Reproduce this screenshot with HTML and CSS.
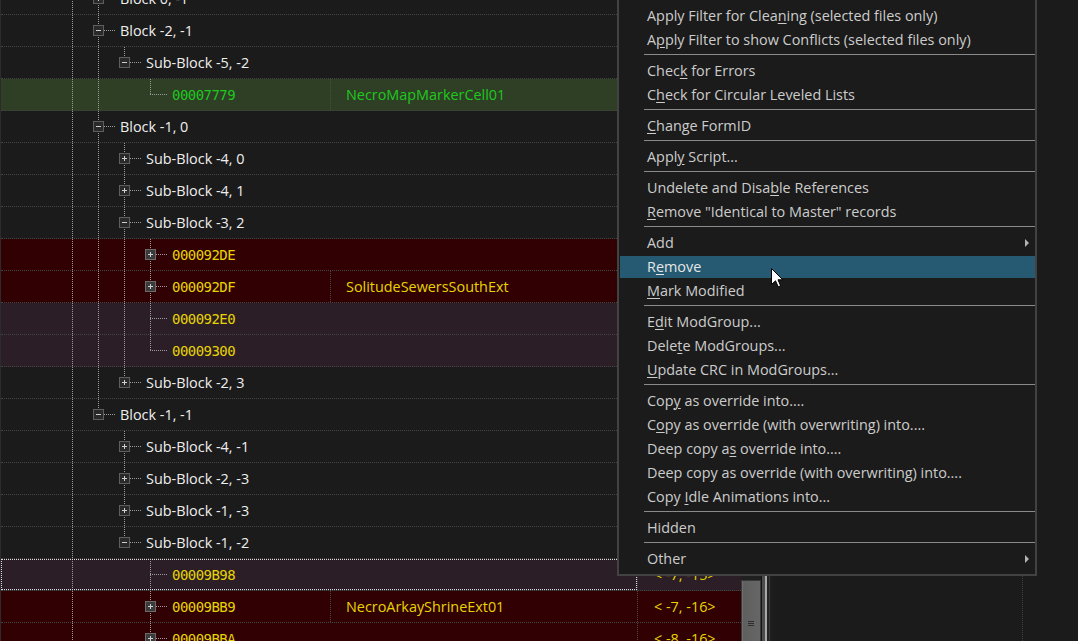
FILE: index.html
```html
<!DOCTYPE html>
<html>
<head>
<meta charset="utf-8">
<link rel="stylesheet" href="styles.css">
</head>
<body>
<div class="app">
  <div class="tree">
    <div class="rows">
      <div class="row"><div class="c1"><span class="g v"></span><span class="n tee"><i class="box plus"></i></span><span class="lbl">Block 0, -1</span></div></div>
      <div class="row"><div class="c1"><span class="g v"></span><span class="n tee"><i class="box minus"></i></span><span class="lbl">Block -2, -1</span></div></div>
      <div class="row"><div class="c1"><span class="g v"></span><span class="g v"></span><span class="n end"><i class="box minus"></i></span><span class="lbl">Sub-Block -5, -2</span></div></div>
      <div class="row green"><div class="c1 fix"><span class="g v"></span><span class="g v"></span><span class="g"></span><span class="n end"></span><span class="hex">00007779</span></div><div class="c2">NecroMapMarkerCell01</div></div>
      <div class="row"><div class="c1"><span class="g v"></span><span class="n tee"><i class="box minus"></i></span><span class="lbl">Block -1, 0</span></div></div>
      <div class="row"><div class="c1"><span class="g v"></span><span class="g v"></span><span class="n tee"><i class="box plus"></i></span><span class="lbl">Sub-Block -4, 0</span></div></div>
      <div class="row"><div class="c1"><span class="g v"></span><span class="g v"></span><span class="n tee"><i class="box plus"></i></span><span class="lbl">Sub-Block -4, 1</span></div></div>
      <div class="row"><div class="c1"><span class="g v"></span><span class="g v"></span><span class="n tee"><i class="box minus"></i></span><span class="lbl">Sub-Block -3, 2</span></div></div>
      <div class="row red"><div class="c1"><span class="g v"></span><span class="g v"></span><span class="g v"></span><span class="n tee"><i class="box plus"></i></span><span class="hex">000092DE</span></div></div>
      <div class="row red"><div class="c1 fix"><span class="g v"></span><span class="g v"></span><span class="g v"></span><span class="n tee"><i class="box plus"></i></span><span class="hex">000092DF</span></div><div class="c2">SolitudeSewersSouthExt</div></div>
      <div class="row purple"><div class="c1"><span class="g v"></span><span class="g v"></span><span class="g v"></span><span class="n tee"></span><span class="hex">000092E0</span></div></div>
      <div class="row purple"><div class="c1"><span class="g v"></span><span class="g v"></span><span class="g v"></span><span class="n end"></span><span class="hex">00009300</span></div></div>
      <div class="row"><div class="c1"><span class="g v"></span><span class="g v"></span><span class="n end"><i class="box plus"></i></span><span class="lbl">Sub-Block -2, 3</span></div></div>
      <div class="row"><div class="c1"><span class="g v"></span><span class="n end"><i class="box minus"></i></span><span class="lbl">Block -1, -1</span></div></div>
      <div class="row"><div class="c1"><span class="g v"></span><span class="g"></span><span class="n tee"><i class="box plus"></i></span><span class="lbl">Sub-Block -4, -1</span></div></div>
      <div class="row"><div class="c1"><span class="g v"></span><span class="g"></span><span class="n tee"><i class="box plus"></i></span><span class="lbl">Sub-Block -2, -3</span></div></div>
      <div class="row"><div class="c1"><span class="g v"></span><span class="g"></span><span class="n tee"><i class="box plus"></i></span><span class="lbl">Sub-Block -1, -3</span></div></div>
      <div class="row"><div class="c1"><span class="g v"></span><span class="g"></span><span class="n end"><i class="box minus"></i></span><span class="lbl">Sub-Block -1, -2</span></div></div>
      <div class="row purple"><div class="c1 focus"><span class="g v"></span><span class="g"></span><span class="g"></span><span class="n tee"></span><span class="hex">00009B98</span></div><div class="c3">&lt; -7, -15&gt;</div></div>
      <div class="row red"><div class="c1 fix"><span class="g v"></span><span class="g"></span><span class="g"></span><span class="n tee"><i class="box plus"></i></span><span class="hex">00009BB9</span></div><div class="c2">NecroArkayShrineExt01</div><div class="c3">&lt; -7, -16&gt;</div></div>
      <div class="row red"><div class="c1"><span class="g v"></span><span class="g"></span><span class="g"></span><span class="n tee"><i class="box plus"></i></span><span class="hex">00009BBA</span></div><div class="c3">&lt; -8, -16&gt;</div></div>
    </div>
  </div>
  <div class="vscroll"><div class="thumb"><i class="grip"></i></div></div>
  <div class="splitter"></div>
  <div class="panel"><div class="pcol"></div></div>
</div>

<div class="menu">
  <div class="mi"><span>Apply Filter</span></div>
  <div class="sep"></div>
  <div class="mi"><span>Apply Filter for Clea<u>n</u>ing (selected files only)</span></div>
  <div class="mi"><span>A<u>p</u>ply Filter to show Conflicts (selected files only)</span></div>
  <div class="sep"></div>
  <div class="mi"><span>Chec<u>k</u> for Errors</span></div>
  <div class="mi"><span>C<u>h</u>eck for Circular Leveled Lists</span></div>
  <div class="sep"></div>
  <div class="mi"><span><u>C</u>hange FormID</span></div>
  <div class="sep"></div>
  <div class="mi"><span>Appl<u>y</u> Script...</span></div>
  <div class="sep"></div>
  <div class="mi"><span>Undelete and Disa<u>b</u>le References</span></div>
  <div class="mi"><span><u>R</u>emove "Identical to Master" records</span></div>
  <div class="sep"></div>
  <div class="mi"><span>Add</span><svg class="arr" width="5" height="8" viewBox="0 0 5 8"><polygon points="0,0 4,4 0,8" fill="#b4b4b4"/></svg></div>
  <div class="mi hot"><span>R<u>e</u>move</span></div>
  <div class="mi"><span><u>M</u>ark Modified</span></div>
  <div class="sep"></div>
  <div class="mi"><span>E<u>d</u>it ModGroup...</span></div>
  <div class="mi"><span>Dele<u>t</u>e ModGroups...</span></div>
  <div class="mi"><span><u>U</u>pdate CRC in ModGroups...</span></div>
  <div class="sep"></div>
  <div class="mi"><span>Cop<u>y</u> as override into....</span></div>
  <div class="mi"><span>C<u>o</u>py as override (with overwriting) into....</span></div>
  <div class="mi"><span>Deep copy a<u>s</u> override into....</span></div>
  <div class="mi"><span>Deep copy as override (with overwriting) into....</span></div>
  <div class="mi"><span>Copy <u>I</u>dle Animations into...</span></div>
  <div class="sep"></div>
  <div class="mi"><span>Hidden</span></div>
  <div class="sep"></div>
  <div class="mi"><span>Other</span><svg class="arr" width="5" height="8" viewBox="0 0 5 8"><polygon points="0,0 4,4 0,8" fill="#b4b4b4"/></svg></div>
</div>

<svg class="cursor" width="13" height="20" viewBox="0 0 13 20"><polygon points="0.5,0.5 0.5,16.5 4.5,12.8 7.2,18.8 9.6,17.8 7,11.8 11.8,11.8" fill="#ffffff" stroke="#000000" stroke-width="1" stroke-linejoin="miter"/></svg>
</body>
</html>
```
FILE: styles.css
```css
html, body {
  margin: 0;
  padding: 0;
  background: #1b1b1b;
  overflow: hidden;
}
body {
  width: 1078px;
  height: 641px;
  position: relative;
  font-family: "Open Sans", "Noto Sans", sans-serif;
  font-size: 14.4px;
  color: #ececec;
}
.app {
  display: flex;
  height: 641px;
}
.tree {
  flex: 0 0 741px;
  box-sizing: border-box;
  border-left: 1px solid #2c2c2c;
  overflow: hidden;
  height: 641px;
}
.rows {
  margin-top: -17px;
}
.row {
  display: flex;
  height: 32px;
  box-sizing: border-box;
  border-bottom: 1px dotted #444444;
}
.row.green { background: #2e3f26; }
.row.red { background: #310002; }
.row.purple { background: #2c1e26; }

.c1 {
  flex: 1 1 auto;
  min-width: 0;
  display: flex;
  align-items: center;
  padding-left: 58px;
  white-space: nowrap;
  overflow: hidden;
}
.c1.fix {
  flex: 0 0 329px;
  box-sizing: border-box;
}
.c1.focus {
  outline: 1px dotted #dcdcdc;
  outline-offset: -1px;
}
.c2 {
  flex: 1 1 auto;
  min-width: 0;
  box-sizing: border-box;
  border-left: 1px dotted #4a4a4a;
  padding-left: 15px;
  display: flex;
  align-items: center;
  white-space: nowrap;
  color: #e6d500;
}
.green .c2 { color: #1ec81e; }
.c3 {
  flex: 0 0 104px;
  box-sizing: border-box;
  border-left: 1px dotted #4a4a4a;
  padding-left: 16px;
  display: flex;
  align-items: center;
  white-space: nowrap;
  color: #e6d500;
}

.g {
  flex: 0 0 26px;
  align-self: stretch;
}
.g.v {
  background: repeating-linear-gradient(to bottom, #9a9a9a 0 1px, transparent 1px 2px) 13px 0 / 1px 100% no-repeat;
}
.n {
  flex: 0 0 35px;
  align-self: stretch;
  display: flex;
  align-items: center;
  background-repeat: no-repeat;
}
.n.tee {
  background-image:
    repeating-linear-gradient(to right, #9a9a9a 0 1px, transparent 1px 2px),
    repeating-linear-gradient(to bottom, #9a9a9a 0 1px, transparent 1px 2px);
  background-position: 13px 15px, 13px 0;
  background-size: 17px 1px, 1px 100%;
}
.n.end {
  background-image:
    repeating-linear-gradient(to right, #9a9a9a 0 1px, transparent 1px 2px),
    repeating-linear-gradient(to bottom, #9a9a9a 0 1px, transparent 1px 2px);
  background-position: 13px 15px, 13px 0;
  background-size: 17px 1px, 1px 16px;
}
.box {
  display: block;
  width: 11px;
  height: 11px;
  box-sizing: border-box;
  margin-left: 8px;
  border: 1px solid #5e5e5e;
  background-color: #2a2a2a;
  background-repeat: no-repeat;
}
.red .box { background-color: #3a3a3a; border-color: #6a6a6a; }
.box.minus {
  background-image: linear-gradient(#cfcfcf, #cfcfcf);
  background-position: 2px 4px;
  background-size: 5px 1px;
}
.box.plus {
  background-image: linear-gradient(#cfcfcf, #cfcfcf), linear-gradient(#cfcfcf, #cfcfcf);
  background-position: 2px 4px, 4px 2px;
  background-size: 5px 1px, 1px 5px;
}
.lbl {
  color: #efefef;
}
.hex {
  font-family: "DejaVu Sans Mono", "Liberation Mono", monospace;
  font-size: 14px;
  letter-spacing: -0.55px;
  color: #e6d500;
}
.green .hex { color: #1ec81e; }

.vscroll {
  flex: 0 0 20px;
  background: #1f1f1f;
}
.thumb {
  margin-top: 580px;
  height: 80px;
  box-sizing: border-box;
  border: 1px solid #3a3a3a;
  background: linear-gradient(to right, #6e6e6e 0 1px, #5f5f5f 1px, #666666);
  display: flex;
  justify-content: center;
  padding-top: 40px;
}
.grip {
  display: block;
  width: 6px;
  height: 5px;
  background: repeating-linear-gradient(to bottom, #2e2e2e 0 1px, transparent 1px 2px);
}
.splitter {
  flex: 0 0 12px;
  background: linear-gradient(to right,
    #151515 0 1px,
    #4b4b4b 1px 4px,
    #a8a8a8 4px 6px,
    #222222 6px 8px,
    #3a3a3a 8px 9px,
    #1e1e1e 9px 12px);
}
.panel {
  flex: 1 1 auto;
  background: #1b1b1b;
  display: flex;
}
.pcol {
  width: 249px;
  border-right: 1px dotted #3e3e3e;
}

.menu {
  position: absolute;
  left: 617px;
  top: -31px;
  width: 420px;
  box-sizing: border-box;
  border: 2px solid #424242;
  background: #1b1b1b;
  padding: 2px 0 3px 0;
  color: #cccccc;
}
.mi {
  height: 24px;
  display: flex;
  align-items: center;
  justify-content: space-between;
  padding-left: 28px;
  padding-right: 5px;
  white-space: nowrap;
}
.mi span {
  margin-bottom: 2px;
}
.mi u {
  text-decoration: underline;
  text-underline-offset: 2px;
  text-decoration-thickness: 1px;
}
.mi.hot {
  background: linear-gradient(#255a72, #255a72) 1px 1px / calc(100% - 1px) 22px no-repeat;
  color: #e6e6e6;
}
.arr {
  display: block;
}
.sep {
  height: 7px;
  box-sizing: border-box;
  padding-top: 2px;
  margin-left: 25px;
}
.sep::before {
  content: "";
  display: block;
  height: 1px;
  background: #8a8a8a;
}
.cursor {
  position: absolute;
  left: 771px;
  top: 268px;
}
```
